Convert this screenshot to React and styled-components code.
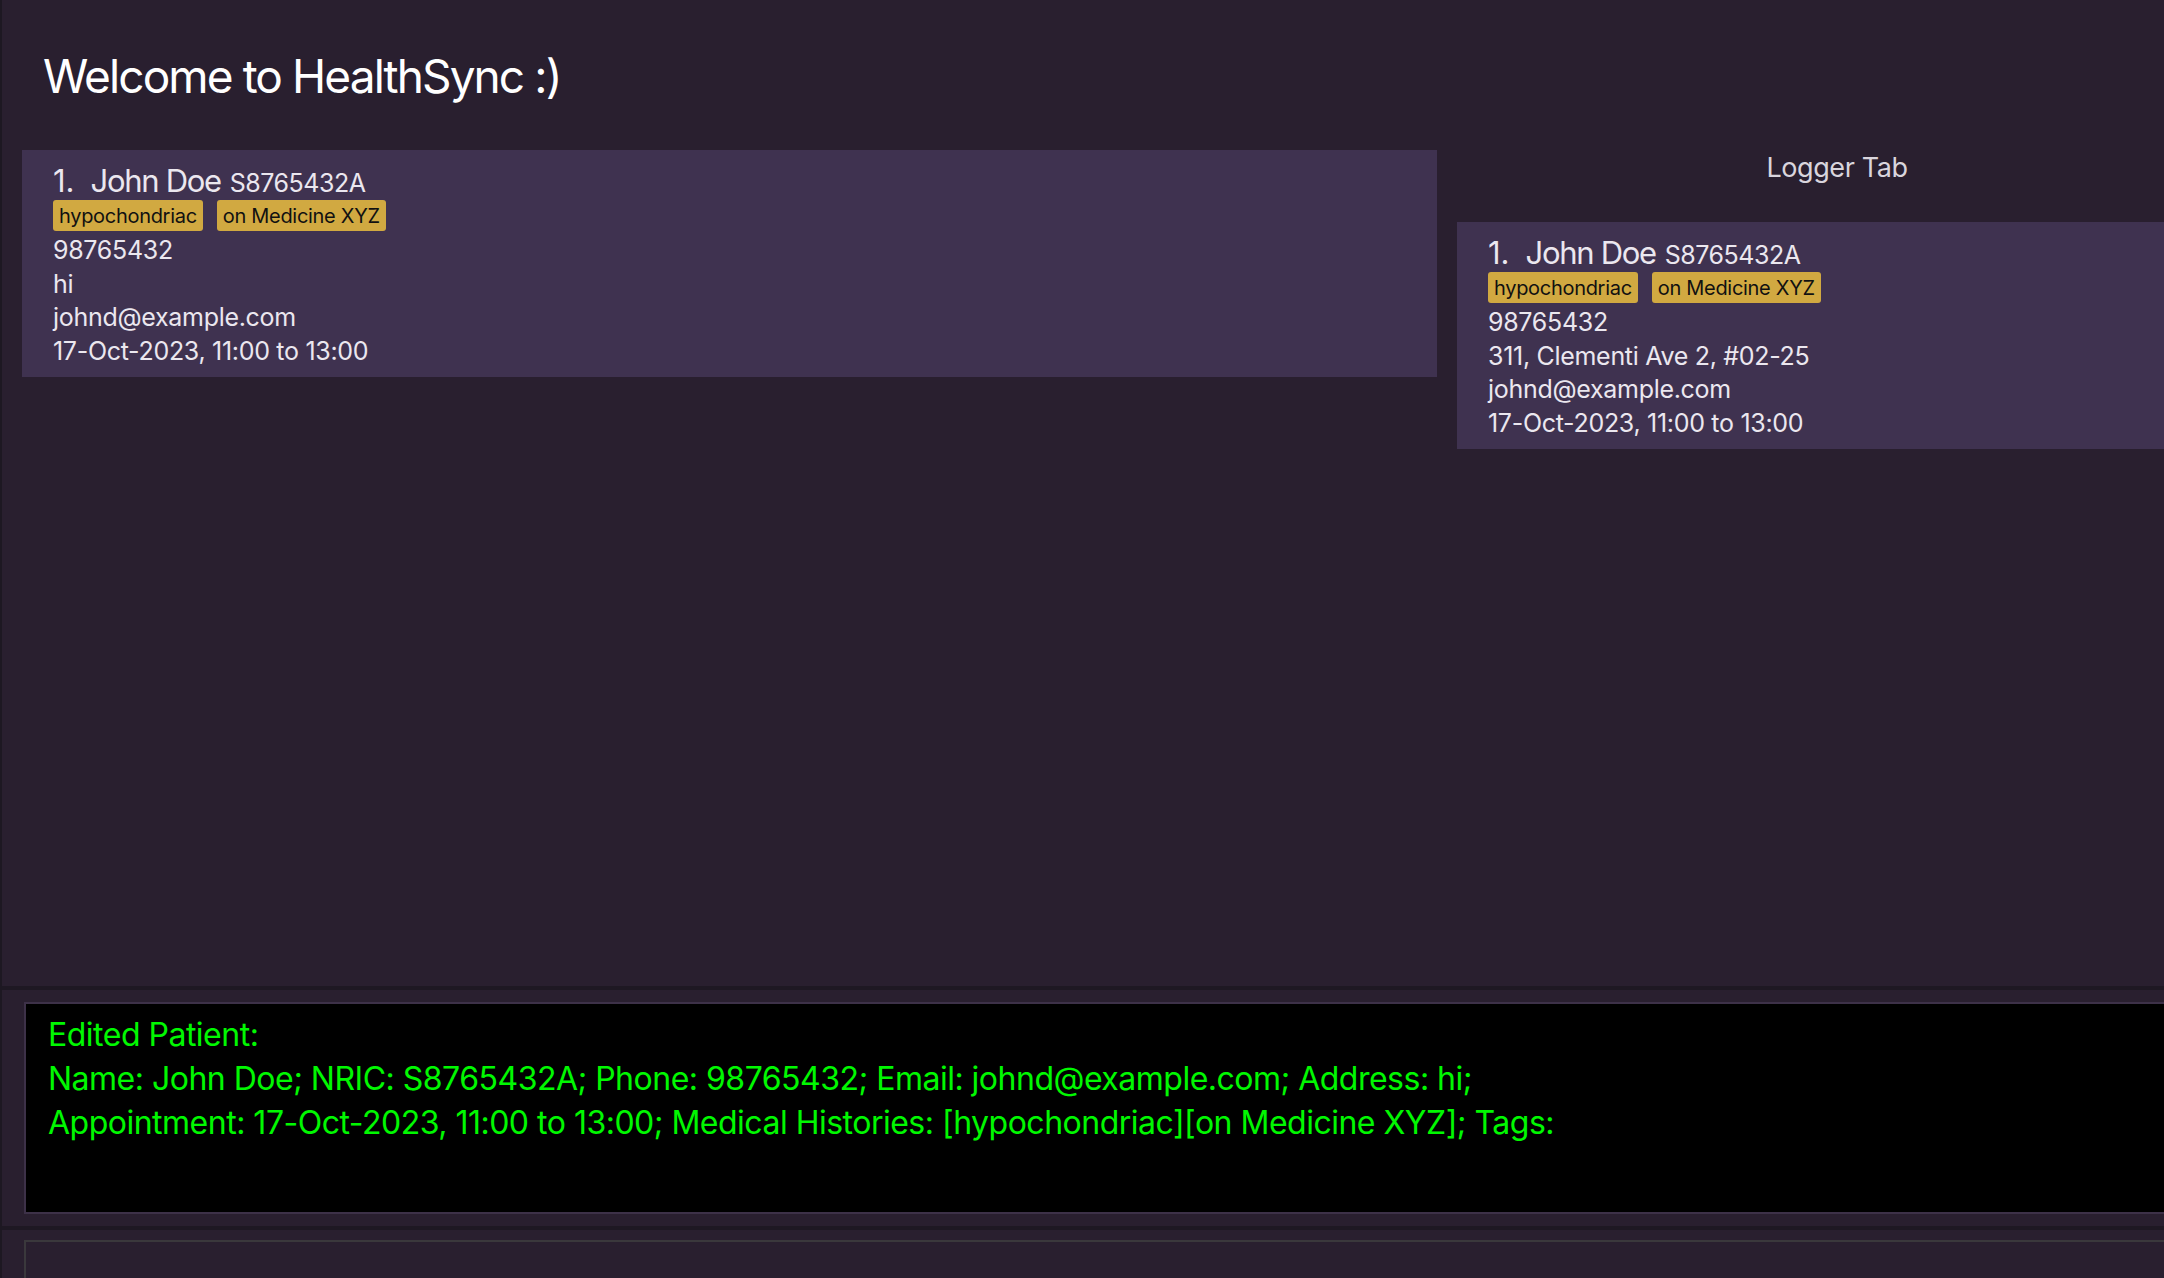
import React from 'react'
import styled, { createGlobalStyle } from 'styled-components'

const GlobalStyle = createGlobalStyle`
  html, body {
    margin: 0;
    padding: 0;
    background: #291f2f;
    overflow: hidden;
  }
  body {
    font-family: Inter, "Noto Sans", "Liberation Sans", sans-serif;
    -webkit-font-smoothing: antialiased;
  }
`

const Window = styled.div`
  width: 2240px;
  height: 1278px;
  display: flex;
  flex-direction: column;
  background: #291f2f;
  border-left: 2px solid #1d1822;
`

const Main = styled.div`
  height: 986px;
  display: flex;
`

const LeftPane = styled.div`
  width: 1415px;
  padding-left: 20px;
  padding-right: 20px;
  display: flex;
  flex-direction: column;
`

const Title = styled.h1`
  margin: 48px 0 46px 21px;
  font-size: 46px;
  line-height: 56px;
  font-weight: 400;
  color: #ffffff;
  letter-spacing: -1.9px;
`

const RightPane = styled.div`
  width: 760px;
  padding-top: 151px;
  display: flex;
  flex-direction: column;
`

const LoggerTitle = styled.div`
  text-align: center;
  font-size: 27px;
  line-height: 34px;
  color: #d9d5dd;
  margin-bottom: 37px;
  letter-spacing: -0.4px;
`

const Card = styled.div`
  background: #3f3250;
  padding: 12px 31px 9px;
  color: #ebe7ef;
`

const NameRow = styled.div`
  display: flex;
  align-items: baseline;
  height: 38px;
`

const Index = styled.span`
  font-size: 31px;
  line-height: 38px;
  margin-right: 16px;
`

const Name = styled.span`
  font-size: 31px;
  line-height: 38px;
  margin-right: 9px;
  letter-spacing: -1.3px;
`

const Nric = styled.span`
  font-size: 25px;
  line-height: 38px;
  letter-spacing: -0.5px;
`

const TagRow = styled.div`
  display: flex;
  gap: 14px;
  height: 31px;
`

const Tag = styled.span`
  display: flex;
  align-items: center;
  height: 31px;
  padding: 0 6px;
  border-radius: 3px;
  background: #d1a941;
  color: #111;
  font-size: 20px;
  letter-spacing: -0.3px;
`

const Lines = styled.div`
  padding-top: 3px;
`

const Line = styled.div`
  font-size: 25px;
  line-height: 33.5px;
  letter-spacing: -0.3px;
`

const Divider = styled.div`
  height: 4px;
  background: #1e1823;
`

const ResultPane = styled.div`
  padding: 12px 0 12px 22px;
`

const ResultBox = styled.div`
  box-sizing: border-box;
  height: 212px;
  background: #000;
  border: 2px solid #3d3148;
  border-right: none;
  padding: 9px 22px;
  color: #00f800;
  font-size: 32px;
  line-height: 44px;
  letter-spacing: -0.5px;
`

const CommandPane = styled.div`
  flex: 1;
  padding: 10px 0 0 22px;
`

const CommandBox = styled.div`
  box-sizing: border-box;
  height: 100%;
  border: 2px solid #3a383c;
  border-right: none;
  border-bottom: none;
  background: #291f2f;
`

const patientCard = (address) => (
  <Card>
    <NameRow>
      <Index>1.</Index>
      <Name>John Doe</Name>
      <Nric>S8765432A</Nric>
    </NameRow>
    <TagRow>
      <Tag>hypochondriac</Tag>
      <Tag>on Medicine XYZ</Tag>
    </TagRow>
    <Lines>
      <Line>98765432</Line>
      <Line>{address}</Line>
      <Line>johnd@example.com</Line>
      <Line>17-Oct-2023, 11:00 to 13:00</Line>
    </Lines>
  </Card>
)

export default function App() {
  return (
    <>
      <GlobalStyle />
      <Window>
        <Main>
          <LeftPane>
            <Title>Welcome to HealthSync :)</Title>
            {patientCard('hi')}
          </LeftPane>
          <RightPane>
            <LoggerTitle>Logger Tab</LoggerTitle>
            {patientCard('311, Clementi Ave 2, #02-25')}
          </RightPane>
        </Main>
        <Divider />
        <ResultPane>
          <ResultBox>
            <div>Edited Patient:</div>
            <div>Name: John Doe; NRIC: S8765432A; Phone: 98765432; Email: johnd@example.com; Address: hi;</div>
            <div>Appointment: 17-Oct-2023, 11:00 to 13:00; Medical Histories: [hypochondriac][on Medicine XYZ]; Tags:</div>
          </ResultBox>
        </ResultPane>
        <Divider />
        <CommandPane>
          <CommandBox />
        </CommandPane>
      </Window>
    </>
  )
}
